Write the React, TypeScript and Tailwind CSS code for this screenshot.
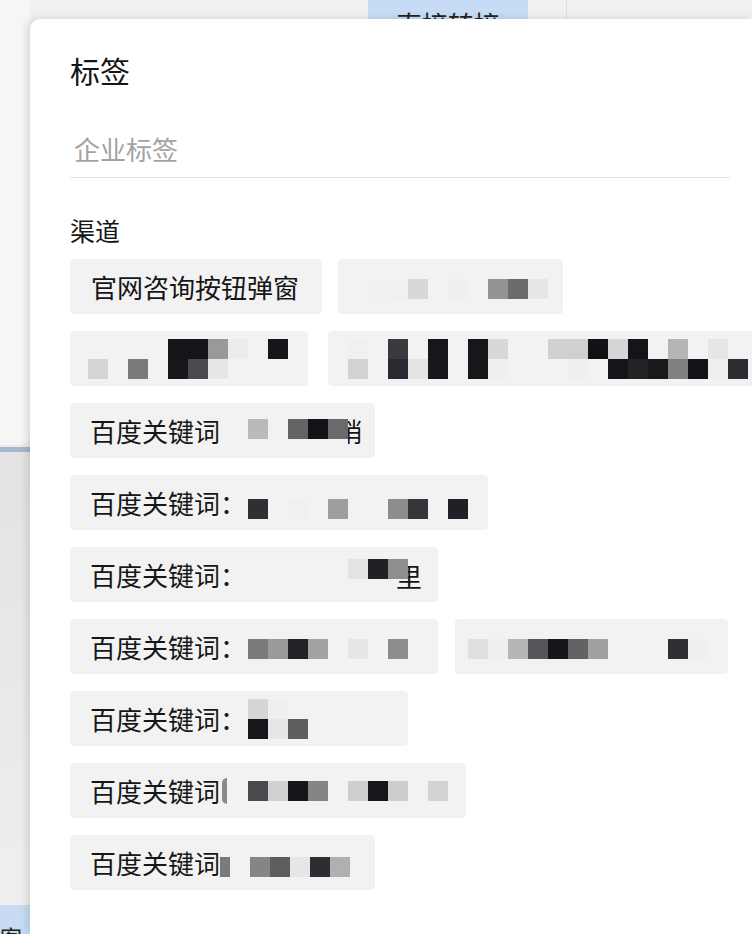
import type { ReactNode } from "react";
import clsx from "clsx";

// redaction mosaic: each row is a list of cell classes, "" = empty cell
function Mosaic({ rows, className }: { rows: string[][]; className?: string }) {
  return (
    <div className={clsx("flex shrink-0 flex-col self-start", className)}>
      {rows.map((row, i) => (
        <div key={i} className="flex">
          {row.map((cell, j) => (
            <div key={j} className={clsx("h-[20px] w-[20px]", cell)} />
          ))}
        </div>
      ))}
    </div>
  );
}

function Chip({ className, children }: { className?: string; children?: ReactNode }) {
  return (
    <div
      className={clsx(
        "flex h-[55px] shrink-0 items-center overflow-hidden whitespace-nowrap rounded-[4px] bg-[#f2f2f2] text-[26px] leading-none text-[#161618]",
        className
      )}
    >
      {children}
    </div>
  );
}

export default function App() {
  return (
    <div className="relative h-[934px] w-[752px] overflow-hidden bg-[#ebebeb] font-[family-name:'Noto_Sans_CJK_SC','Noto_Sans',sans-serif]">
      {/* page behind the sheet */}
      <div className="flex h-full">
        <div className="flex w-[30px] shrink-0 flex-col">
          <div className="h-[445px] rounded-br-[10px] bg-[#f6f6f6]" />
          <div className="mt-[2px] h-[5px] bg-[#a3b8ce]" />
          <div className="flex-1 bg-gradient-to-b from-[#e3e3e3] to-[#efefef]" />
          <div className="h-[29px] overflow-hidden bg-[#c7dcf2] pt-[18px] text-[22px] leading-[26px] text-[#222]">客处</div>
        </div>
        <div className="flex-1">
          <div className="flex h-[60px] bg-[#f0f0f0]">
            <div className="w-[338px]" />
            <div className="flex w-[160px] justify-center bg-[#c6dcf4] pt-[6px] text-[26px] leading-[36px] text-[#222]">
              直接转接
            </div>
            <div className="w-[38px]" />
            <div className="w-px bg-[#dedede]" />
          </div>
        </div>
      </div>

      {/* tag sheet */}
      <div className="absolute bottom-0 left-[30px] right-0 top-[19px] overflow-hidden rounded-tl-[10px] bg-white pl-[40px] pr-[22px] shadow-[-3px_0_8px_rgba(0,0,0,0.12)]">
        <h2 className="mt-[30px] text-[30px] leading-[42px] text-[#161618]">标签</h2>
        <div className="mt-[38px] h-[49px] border-b border-[#e4e4e4] pl-[4px] text-[26px] leading-[40px] text-[#a3a3a3]">
          企业标签
        </div>
        <div className="mt-[34px] text-[25px] leading-[36px] text-[#161618]">渠道</div>

        <div className="mt-[11px] flex flex-col gap-[17px]">
          <div className="flex gap-[16px]">
            <Chip className="w-[252px] pl-[21px]">官网咨询按钮弹窗</Chip>
            <Chip className="w-[225px] pl-[10px]">
              <Mosaic
                className="mt-[20px]"
                rows={[["bg-[#f3f3f3]", "bg-[#f1f1f1]", "bg-[#f0f0f0]", "bg-[#d8d8d8]", "", "bg-[#efefef]", "", "bg-[#949494]", "bg-[#6b6b6b]", "bg-[#e6e6e6]"]]}
              />
            </Chip>
          </div>

          <div className="flex gap-[20px]">
            <Chip className="w-[238px] pl-[18px]">
              <Mosaic
                className="mt-[8px]"
                rows={[
                  ["", "", "", "", "bg-[#141519]", "bg-[#141519]", "bg-[#999999]", "bg-[#ececec]", "", "bg-[#15161a]", ""],
                  ["bg-[#d4d4d4]", "", "bg-[#7a7a7a]", "", "bg-[#16171b]", "bg-[#4a4a4e]", "bg-[#e6e6e6]", "", "", "", ""],
                ]}
              />
            </Chip>
            <Chip className="w-[440px] pl-[20px]">
              <Mosaic
                className="mt-[8px]"
                rows={[
                  ["bg-[#f0f0f0]", "", "bg-[#3a3a3e]", "", "bg-[#16171b]", "", "bg-[#16171b]", "bg-[#d8d8d8]", "", "", "bg-[#d0d0d0]", "bg-[#d0d0d0]", "bg-[#111215]", "bg-[#d6d6d6]", "bg-[#141519]", "", "bg-[#b5b5b5]", "", "bg-[#e6e6e6]", ""],
                  ["bg-[#d2d2d2]", "", "bg-[#272a30]", "bg-[#e4e4e4]", "bg-[#16171b]", "", "bg-[#16171b]", "bg-[#efefef]", "", "", "", "bg-[#efefef]", "", "bg-[#141519]", "bg-[#232326]", "bg-[#18191c]", "bg-[#808080]", "bg-[#131417]", "bg-[#eeeeee]", "bg-[#2b2d33]"],
                ]}
              />
            </Chip>
          </div>

          <div className="flex">
            <Chip className="w-[305px] pl-[20px]">
              <span>百度关键词</span>
              <Mosaic
                className="ml-[8px] mt-[16px]"
                rows={[["", "bg-[#bababa]", "", "bg-[#646464]", "bg-[#121318]", "bg-[#6a6a6a]"]]}
              />
              <span className="flex w-[14px] justify-end overflow-hidden">
                <span className="shrink-0">销</span>
              </span>
            </Chip>
          </div>

          <div className="flex">
            <Chip className="w-[418px] pl-[20px]">
              <span>百度关键词：</span>
              <Mosaic
                className="ml-[2px] mt-[24px]"
                rows={[["bg-[#2f3033]", "", "bg-[#f0f0f0]", "", "bg-[#9e9e9e]", "", "", "bg-[#8c8c8c]", "bg-[#34363a]", "", "bg-[#1f2126]"]]}
              />
            </Chip>
          </div>

          <div className="flex">
            <Chip className="w-[368px] pl-[20px]">
              <span>百度关键词：</span>
              <Mosaic
                className="relative z-10 ml-[102px] mt-[12px]"
                rows={[["bg-[#e3e3e3]", "bg-[#1f2125]", "bg-[#8e8e8e]"]]}
              />
              <span className="-ml-[12px] mt-[2px]">里</span>
            </Chip>
          </div>

          <div className="flex gap-[17px]">
            <Chip className="w-[368px] pl-[20px]">
              <span>百度关键词：</span>
              <Mosaic
                className="ml-[2px] mt-[20px]"
                rows={[["bg-[#7a7a7a]", "bg-[#9a9a9a]", "bg-[#222327]", "bg-[#a3a3a3]", "", "bg-[#e6e6e6]", "", "bg-[#8c8c8c]"]]}
              />
            </Chip>
            <Chip className="w-[273px] pl-[13px]">
              <Mosaic
                className="mt-[20px]"
                rows={[["bg-[#e0e0e0]", "bg-[#efefef]", "bg-[#b6b6b6]", "bg-[#56565a]", "bg-[#15161a]", "bg-[#636366]", "bg-[#a0a0a0]", "", "", "", "bg-[#2f3034]", "bg-[#efefef]"]]}
              />
            </Chip>
          </div>

          <div className="flex">
            <Chip className="w-[338px] pl-[20px]">
              <span>百度关键词：</span>
              <Mosaic
                className="ml-[2px] mt-[8px]"
                rows={[
                  ["bg-[#d6d6d6]", "bg-[#efefef]"],
                  ["bg-[#16171b]", "bg-[#e6e6e6]", "bg-[#5e5e60]"],
                ]}
              />
            </Chip>
          </div>

          <div className="flex">
            <Chip className="w-[396px] pl-[20px]">
              <span>百度关键词</span>
              <div className="ml-[2px] h-[26px] w-[5px] rounded-l-full bg-[#8a8a8a]" />
              <Mosaic
                className="ml-[21px] mt-[18px]"
                rows={[["bg-[#4a4a4e]", "bg-[#d0d0d0]", "bg-[#15161a]", "bg-[#858585]", "", "bg-[#cfcfcf]", "bg-[#16171b]", "bg-[#cdcdcd]", "", "bg-[#d3d3d3]"]]}
              />
            </Chip>
          </div>

          <div className="flex">
            <Chip className="w-[305px] pl-[20px]">
              <span className="flex w-[140px] overflow-hidden">
                <span className="shrink-0">百度关键词</span>
              </span>
              <div className="-ml-[10px] mt-[22px] h-[20px] w-[10px] self-start bg-[#7a7a7a]" />
              <Mosaic
                className="ml-[20px] mt-[22px]"
                rows={[["bg-[#858585]", "bg-[#5d5d60]", "bg-[#e6e6e6]", "bg-[#2d2e33]", "bg-[#b0b0b0]"]]}
              />
            </Chip>
          </div>
        </div>
      </div>
    </div>
  );
}
